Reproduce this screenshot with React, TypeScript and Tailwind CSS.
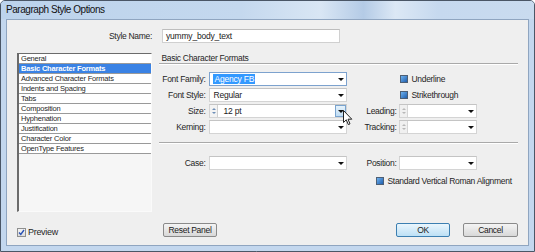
import React from "react";

const FONT = "font-['Liberation_Sans',Arial,sans-serif]";

function Arrow() {
  return (
    <span className="w-0 h-0 border-l-[3px] border-r-[3px] border-t-[3px] border-l-transparent border-r-transparent border-t-[#111]" />
  );
}

function Spinner({ disabled }: { disabled?: boolean }) {
  const c = disabled ? "border-b-[#b8b8b8]" : "border-b-[#6f8fb8]";
  const c2 = disabled ? "border-t-[#b8b8b8]" : "border-t-[#6f8fb8]";
  return (
    <div
      className={`w-[8px] h-full flex flex-col items-center justify-center gap-[2px] border-r ${
        disabled ? "bg-[#f0f0f0] border-[#d6d6d6]" : "bg-[#f3f3f3] border-[#d0d0d0]"
      }`}
    >
      <span className={`w-0 h-0 border-l-[2px] border-r-[2px] border-b-[2px] border-l-transparent border-r-transparent ${c}`} />
      <span className={`w-0 h-0 border-l-[2px] border-r-[2px] border-t-[2px] border-l-transparent border-r-transparent ${c2}`} />
    </div>
  );
}

function Select({
  w,
  children,
  focused,
  spinner,
  spinnerDisabled,
  hotButton,
}: {
  w: string;
  children?: React.ReactNode;
  focused?: boolean;
  spinner?: boolean;
  spinnerDisabled?: boolean;
  hotButton?: boolean;
}) {
  return (
    <div
      className={`${w} h-[14px] bg-white border flex items-center ${
        focused ? "border-[#7da2ce]" : "border-[#d4d4d4] border-t-[#c4c4c4]"
      }`}
    >
      {spinner && <Spinner disabled={spinnerDisabled} />}
      <div className="flex-1 flex items-center pl-[3px] text-[8.5px] tracking-[-0.2px] text-[#1a1a1a] leading-none">
        {children}
      </div>
      {hotButton ? (
        <div className="w-[11px] h-[12px] mr-[0px] border border-[#7aa4cf] bg-gradient-to-b from-[#e6f3fc] to-[#bfdcf3] flex items-center justify-center">
          <Arrow />
        </div>
      ) : (
        <div className="w-[11px] h-full flex items-center justify-center">
          <Arrow />
        </div>
      )}
    </div>
  );
}

function BlueCheck() {
  return (
    <span className="w-[8px] h-[8px] border border-[#4d5f75] bg-gradient-to-br from-[#6fb2ee] to-[#1f5fae] shrink-0" />
  );
}

function Button({
  w,
  children,
  primary,
}: {
  w: string;
  children: React.ReactNode;
  primary?: boolean;
}) {
  return (
    <div
      className={`${w} h-[14px] rounded-[2px] border flex items-center justify-center text-[8.5px] tracking-[-0.3px] text-[#1a1a1a] leading-none ${
        primary
          ? "border-[#3c7fb1] bg-gradient-to-b from-[#eaf6fd] to-[#bde0f5]"
          : "border-[#8a8a8a] bg-gradient-to-b from-[#f4f4f4] to-[#d8d8d8]"
      }`}
    >
      {children}
    </div>
  );
}

const items = [
  "General",
  "Basic Character Formats",
  "Advanced Character Formats",
  "Indents and Spacing",
  "Tabs",
  "Composition",
  "Hyphenation",
  "Justification",
  "Character Color",
  "OpenType Features",
];

export default function App() {
  const label = "text-[8.5px] tracking-[-0.3px] text-[#1f1f1f] leading-none";
  return (
    <div
      className={`${FONT} w-[535px] h-[252px] flex flex-col border border-[#4a5666] rounded-t-[5px] bg-[#c3d7ee] overflow-hidden relative`}
    >
      {/* Title bar */}
      <div className="h-[18px] shrink-0 flex items-center pl-[5px] bg-[linear-gradient(90deg,#bcd3ec_0%,#c4d8ee_45%,#d9e6f4_60%,#b4cbe6_68%,#dce8f5_74%,#c6d9ef_82%,#c9dbef_100%)]">
        <span className="text-[10px] tracking-[-0.45px] text-[#111] leading-none">
          Paragraph Style Options
        </span>
      </div>

      {/* Client area */}
      <div className="flex-1 mx-[5px] mb-[5px] border border-[#8fa5c0] bg-[#efefef] flex flex-col pl-[10px] pr-[10px]">
        {/* Style name row */}
        <div className="mt-[9px] flex items-center h-[14px]">
          <div className={`w-[136px] text-right pr-[1px] ${label}`}>Style Name:</div>
          <div className="ml-[9px] w-[178px] h-[14px] bg-white border border-[#d0d0d0] border-t-[#bdbdbd] flex items-center pl-[3px] text-[8.5px] tracking-[-0.2px] text-[#1a1a1a] leading-none">
            yummy_body_text
          </div>
        </div>

        {/* Main */}
        <div className="mt-[10px] flex">
          {/* List */}
          <div className="w-[136px] h-[159px] border-l-2 border-t border-[#6b6b6b] border-r border-r-[#fafafa] border-b border-b-[#fafafa] bg-[#f6f6f6] flex flex-col">
            {items.map((it, i) => (
              <div
                key={it}
                className={`h-[10px] shrink-0 flex items-center pl-[2px] border-b border-[#9a9a9a] text-[7.5px] tracking-[-0.2px] leading-none ${
                  i === 1
                    ? "bg-[#3a82e4] text-white font-bold"
                    : "bg-white text-[#1f1f1f]"
                }`}
              >
                {it}
              </div>
            ))}
          </div>

          {/* Right panel */}
          <div className="ml-[7px] w-[360px] flex flex-col">
            <div className="h-[10px] flex items-center pl-[2px]">
              <span className={label}>Basic Character Formats</span>
            </div>
            <div className="h-[1px] bg-[#a9a9a9]" />
            <div className="h-[1px] bg-white" />

            <div className="mt-[7px] flex flex-col gap-[2px]">
              {/* Font Family */}
              <div className="flex items-center h-[14px]">
                <div className={`w-[46px] text-right ${label}`}>Font Family:</div>
                <div className="ml-[4px]">
                  <Select w="w-[138px]" focused>
                    <span className="bg-[#3399ff] text-white px-[1px] py-[1px]">Agency FB</span>
                  </Select>
                </div>
                <div className="ml-[53px] flex items-center">
                  <BlueCheck />
                  <span className={`ml-[3px] ${label}`}>Underline</span>
                </div>
              </div>
              {/* Font Style */}
              <div className="flex items-center h-[14px]">
                <div className={`w-[46px] text-right ${label}`}>Font Style:</div>
                <div className="ml-[4px]">
                  <Select w="w-[138px]">Regular</Select>
                </div>
                <div className="ml-[53px] flex items-center">
                  <BlueCheck />
                  <span className={`ml-[3px] ${label}`}>Strikethrough</span>
                </div>
              </div>
              {/* Size */}
              <div className="flex items-center h-[14px]">
                <div className={`w-[46px] text-right ${label}`}>Size:</div>
                <div className="ml-[4px]">
                  <Select w="w-[138px]" spinner hotButton>
                    <span className="ml-[2px]">12 pt</span>
                  </Select>
                </div>
                <div className={`w-[49px] text-right ${label}`}>Leading:</div>
                <div className="ml-[3px]">
                  <Select w="w-[78px]" spinner spinnerDisabled />
                </div>
              </div>
              {/* Kerning */}
              <div className="flex items-center h-[14px]">
                <div className={`w-[46px] text-right ${label}`}>Kerning:</div>
                <div className="ml-[4px]">
                  <Select w="w-[138px]" />
                </div>
                <div className={`w-[49px] text-right ${label}`}>Tracking:</div>
                <div className="ml-[3px]">
                  <Select w="w-[78px]" spinner spinnerDisabled />
                </div>
              </div>
            </div>

            <div className="mt-[8px] h-[1px] bg-[#a9a9a9]" />
            <div className="h-[1px] bg-white" />

            {/* Case row */}
            <div className="mt-[12px] flex items-center h-[14px]">
              <div className={`w-[46px] text-right ${label}`}>Case:</div>
              <div className="ml-[4px]">
                <Select w="w-[138px]" />
              </div>
              <div className={`w-[49px] text-right ${label}`}>Position:</div>
              <div className="ml-[3px]">
                <Select w="w-[78px]" />
              </div>
            </div>

            <div className="mt-[7px] ml-[217px] flex items-center h-[8px]">
              <BlueCheck />
              <span className={`ml-[3px] ${label}`}>Standard Vertical Roman Alignment</span>
            </div>
          </div>
        </div>

        {/* Bottom row */}
        <div className="mt-[11px] flex items-end">
          <div className="w-[136px] flex items-center">
            <span className="w-[9px] h-[9px] border border-[#8e8f8f] bg-gradient-to-b from-[#f4f4f4] to-[#dcdcdc] flex items-center justify-center">
              <svg width="7" height="7" viewBox="0 0 7 7">
                <path d="M1 3.5 L2.8 5.5 L6 1" stroke="#2a52b5" strokeWidth="1.4" fill="none" />
              </svg>
            </span>
            <span className="ml-[2px] text-[9px] tracking-[-0.3px] text-[#1f1f1f] leading-none">
              Preview
            </span>
          </div>
          <div className="ml-[10px]">
            <Button w="w-[54px]">Reset Panel</Button>
          </div>
          <div className="flex-1" />
          <Button w="w-[54px]" primary>
            OK
          </Button>
          <div className="ml-[13px]">
            <Button w="w-[55px]">Cancel</Button>
          </div>
        </div>
      </div>

      {/* Mouse cursor */}
      <svg
        className="absolute left-[342px] top-[109px]"
        width="10"
        height="16"
        viewBox="0 0 10 16"
      >
        <path
          d="M0.5 0.5 L0.5 12.5 L3.3 9.8 L5.3 14.6 L7 13.9 L5 9.2 L8.8 9.2 Z"
          fill="white"
          stroke="#222"
          strokeWidth="1"
          strokeLinejoin="miter"
        />
      </svg>
    </div>
  );
}
